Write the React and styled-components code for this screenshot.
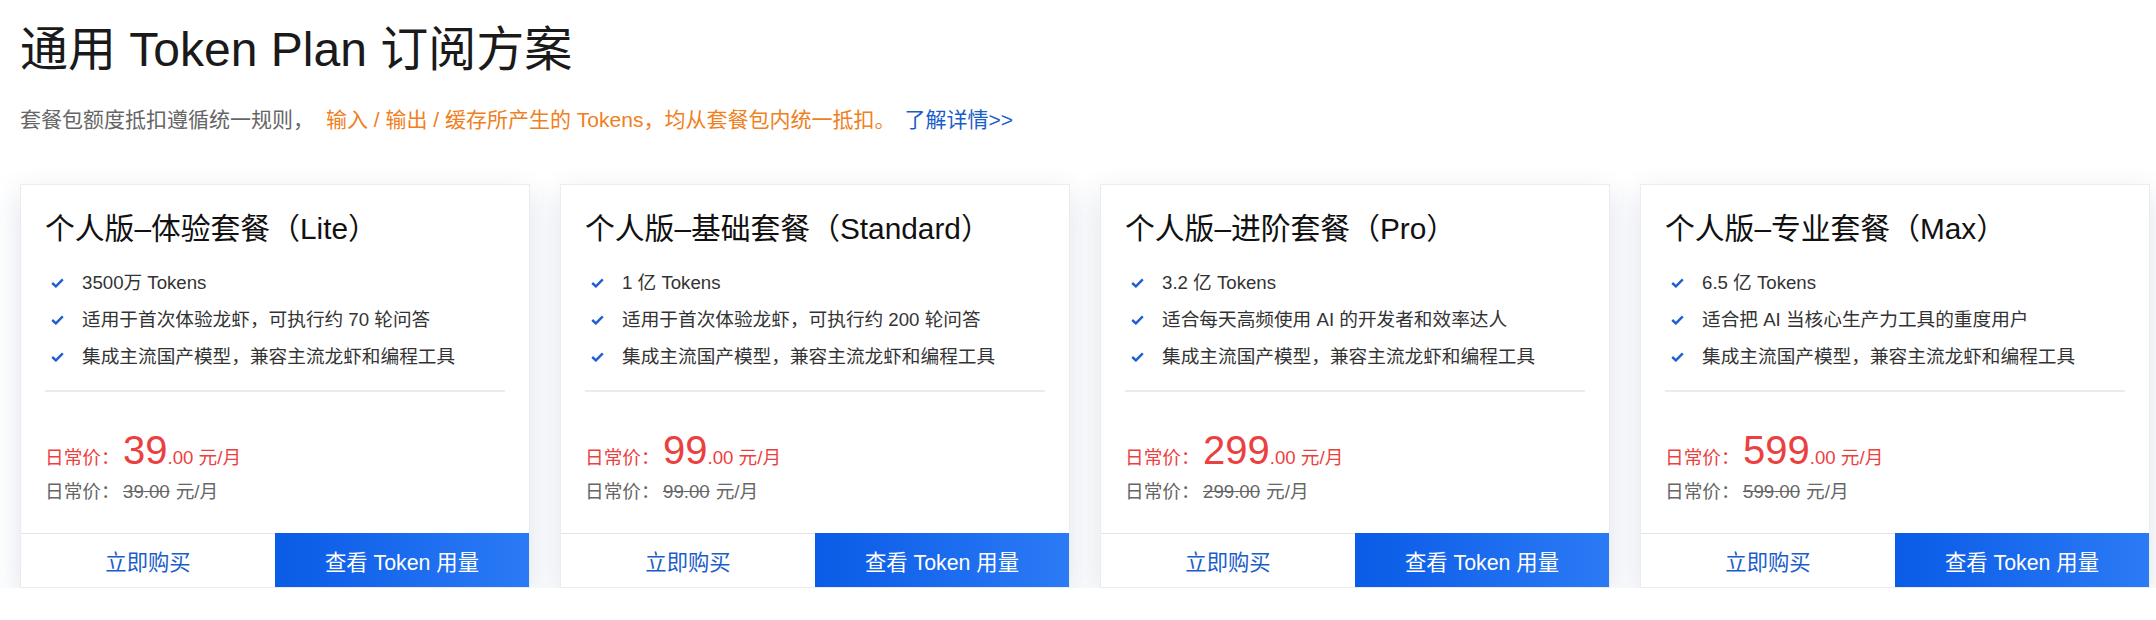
import React from "react";
import styled, { createGlobalStyle } from "styled-components";

const FONT = `"Liberation Sans", Arial, "Noto Sans CJK SC", sans-serif`;

const COLORS = {
  text: "#1a1a1a",
  gray: "#666666",
  orange: "#f0801e",
  blue: "#1a5dc9",
  red: "#ec3f3f",
  line: "#ebebeb",
};

const GlobalStyle = createGlobalStyle`
  html, body {
    margin: 0;
    padding: 0;
    background: #ffffff;
  }
  body {
    font-family: ${FONT};
    color: ${COLORS.text};
  }
`;

const Page = styled.div`
  padding: 22px 0 0 20px;
  width: 2156px;
  box-sizing: border-box;
`;

const Title = styled.h1`
  margin: 0;
  font-size: 48px;
  line-height: 56px;
  font-weight: normal;
  color: ${COLORS.text};
`;

const Intro = styled.p`
  margin: 27px 0 0;
  font-size: 21px;
  line-height: 30px;
  color: ${COLORS.gray};
`;

const Highlight = styled.span`
  color: ${COLORS.orange};
  margin-left: 12px;
`;

const MoreLink = styled.a`
  color: ${COLORS.blue};
  margin-left: 9px;
  text-decoration: none;
`;

const Cards = styled.div`
  display: grid;
  grid-template-columns: repeat(4, 510px);
  column-gap: 30px;
  margin-top: 49px;
`;

const Card = styled.div`
  height: 404px;
  box-sizing: border-box;
  border: 1px solid #ececec;
  background: #fff;
  box-shadow: 0 10px 28px rgba(30, 60, 120, 0.15);
  display: flex;
  flex-direction: column;
`;

const CardBody = styled.div`
  flex: 1;
  padding: 24px 24px 0 24px;
`;

const CardTitle = styled.h2`
  margin: 0;
  font-size: 29.8px;
  line-height: 40px;
  font-weight: normal;
  color: #111;
`;

const Features = styled.ul`
  list-style: none;
  margin: 15px 0 0;
  padding: 0 0 15px;
  border-bottom: 2px solid ${COLORS.line};
`;

const Feature = styled.li`
  display: flex;
  align-items: center;
  font-size: 18.67px;
  line-height: 37px;
  color: #333;
`;

const Check = styled.svg`
  width: 13px;
  height: 10px;
  margin: 0 18px 0 6px;
  flex: none;
`;

const Prices = styled.div`
  margin-top: 38px;
`;

const PriceRow = styled.div`
  display: flex;
  align-items: baseline;
  color: ${(p) => (p.$current ? COLORS.red : COLORS.gray)};
  font-size: 18.67px;
  line-height: ${(p) => (p.$current ? "40px" : "28px")};
`;

const PriceLabel = styled.span`
  width: 78px;
  flex: none;
`;

const Amount = styled.span`
  font-size: 40px;
`;

const Struck = styled.span`
  text-decoration: line-through;
  margin-right: 6px;
`;

const Footer = styled.div`
  display: grid;
  grid-template-columns: 1fr 1fr;
  height: 54px;
`;

const FooterButton = styled.button`
  border: none;
  margin: 0;
  font-family: ${FONT};
  font-size: 21.33px;
  cursor: pointer;
  color: ${(p) => (p.$primary ? "#fff" : COLORS.blue)};
  background: ${(p) =>
    p.$primary ? "linear-gradient(90deg, #0a5be6 0%, #2b7bf6 100%)" : "#fff"};
  border-top: ${(p) => (p.$primary ? "none" : `1px solid #e4e4e4`)};
`;

const plans = [
  {
    name: "个人版–体验套餐（Lite）",
    features: ["3500万 Tokens", "适用于首次体验龙虾，可执行约 70 轮问答", "集成主流国产模型，兼容主流龙虾和编程工具"],
    price: "39",
  },
  {
    name: "个人版–基础套餐（Standard）",
    features: ["1 亿 Tokens", "适用于首次体验龙虾，可执行约 200 轮问答", "集成主流国产模型，兼容主流龙虾和编程工具"],
    price: "99",
  },
  {
    name: "个人版–进阶套餐（Pro）",
    features: ["3.2 亿 Tokens", "适合每天高频使用 AI 的开发者和效率达人", "集成主流国产模型，兼容主流龙虾和编程工具"],
    price: "299",
  },
  {
    name: "个人版–专业套餐（Max）",
    features: ["6.5 亿 Tokens", "适合把 AI 当核心生产力工具的重度用户", "集成主流国产模型，兼容主流龙虾和编程工具"],
    price: "599",
  },
];

function CheckIcon() {
  return (
    <Check viewBox="0 0 13 10">
      <path d="M1.2 5 L4.9 8.4 L11.8 1.4" fill="none" stroke="#1d5fd1" strokeWidth="2.4" />
    </Check>
  );
}

function PlanCard({ plan }) {
  return (
    <Card>
      <CardBody>
        <CardTitle>{plan.name}</CardTitle>
        <Features>
          {plan.features.map((f) => (
            <Feature key={f}>
              <CheckIcon />
              {f}
            </Feature>
          ))}
        </Features>
        <Prices>
          <PriceRow $current>
            <PriceLabel>日常价：</PriceLabel>
            <Amount>{plan.price}</Amount>
            .00 元/月
          </PriceRow>
          <PriceRow>
            <PriceLabel>日常价：</PriceLabel>
            <Struck>{plan.price}.00</Struck>
            元/月
          </PriceRow>
        </Prices>
      </CardBody>
      <Footer>
        <FooterButton>立即购买</FooterButton>
        <FooterButton $primary>查看 Token 用量</FooterButton>
      </Footer>
    </Card>
  );
}

export default function App() {
  return (
    <>
      <GlobalStyle />
      <Page>
        <Title>通用 Token Plan 订阅方案</Title>
        <Intro>
          套餐包额度抵扣遵循统一规则，
          <Highlight>输入 / 输出 / 缓存所产生的 Tokens，均从套餐包内统一抵扣。</Highlight>
          <MoreLink href="#">了解详情&gt;&gt;</MoreLink>
        </Intro>
        <Cards>
          {plans.map((p) => (
            <PlanCard key={p.name} plan={p} />
          ))}
        </Cards>
      </Page>
    </>
  );
}
